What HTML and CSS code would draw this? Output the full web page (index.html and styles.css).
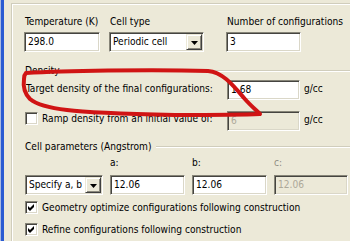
FILE: index.html
```html
<!DOCTYPE html>
<html>
<head>
<meta charset="utf-8">
<link rel="stylesheet" href="styles.css">
</head>
<body>
<div class="win">
  <div class="edge"></div>
  <div class="pane">
    <div class="frame">
      <div class="row-top">
        <div class="field w-temp">
          <div class="lbl">Temperature (K)</div>
          <div class="box">298.0</div>
        </div>
        <div class="field w-cell">
          <div class="lbl">Cell type</div>
          <div class="box combo"><span class="val">Periodic cell</span><span class="drop"><svg width="7" height="4" viewBox="0 0 7 4"><polygon points="0,0 7,0 3.5,4" fill="#000"/></svg></span></div>
        </div>
        <div class="field w-num">
          <div class="lbl">Number of configurations</div>
          <div class="box">3</div>
        </div>
      </div>

      <div class="ghead g-density"><span>Density</span><i class="rule"></i></div>
      <div class="drow d1">
        <div class="ilbl">Target density of the final configurations:</div>
        <div class="box">1.68</div>
        <div class="unit">g/cc</div>
      </div>
      <div class="drow d2">
        <div class="check-line"><span class="cb"></span><span>Ramp density from an initial value of:</span></div>
        <div class="box disabled">6</div>
        <div class="unit">g/cc</div>
      </div>

      <div class="ghead g-cell"><span>Cell parameters (Angstrom)</span><i class="rule"></i></div>
      <div class="cgrid">
        <div></div>
        <div class="lbl">a:</div>
        <div class="lbl">b:</div>
        <div class="lbl dim">c:</div>
        <div class="box combo"><span class="val">Specify a, b</span><span class="drop"><svg width="7" height="4" viewBox="0 0 7 4"><polygon points="0,0 7,0 3.5,4" fill="#000"/></svg></span></div>
        <div class="box">12.06</div>
        <div class="box">12.06</div>
        <div class="box disabled">12.06</div>
      </div>

      <div class="check-line c1"><span class="cb"><svg width="9" height="9" viewBox="0 0 9 9"><polygon points="1,3 3,5 7,1 7,4 3,8 1,6" fill="#000"/></svg></span><span>Geometry optimize configurations following construction</span></div>
      <div class="check-line c2"><span class="cb"><svg width="9" height="9" viewBox="0 0 9 9"><polygon points="1,3 3,5 7,1 7,4 3,8 1,6" fill="#000"/></svg></span><span>Refine configurations following construction</span></div>
    </div>
  </div>
  <svg class="ink" width="350" height="241" viewBox="0 0 350 241"><path d="M26 73 C60 71,150 69,208 71 C222 72,232 84,244 98 C250 105,256 110,260 114 C240 115,200 115,175 115 C130 114,90 113,67 110 C50 108,36 104,30 99 C25 94,23 86,24 79 C24 76,25 74,26 73" fill="none" stroke="#D01414" stroke-width="4" stroke-linecap="round" stroke-linejoin="round"/></svg>
</div>
</body>
</html>
```

FILE: styles.css
```css
html, body {
  margin: 0;
  padding: 0;
}
body {
  width: 350px;
  height: 241px;
  overflow: hidden;
  background: #ECE9D8;
  font-family: "DejaVu Sans Condensed", "Liberation Sans", Arial, sans-serif;
  font-size: 10.1px;
  color: #000;
}
.win {
  position: relative;
  display: flex;
  width: 350px;
  height: 241px;
}
.edge {
  width: 4px;
  flex: none;
  background: linear-gradient(to right, #A9B9E0 0, #A9B9E0 1px, #2A5BD2 1px, #2A5BD2 4px);
}
.pane {
  flex: 1;
  min-width: 0;
}
.frame {
  margin: 3px 0 0 7px;
  border-top: 1px solid #D0CDBC;
  border-left: 1px solid #D0CDBC;
  box-shadow: inset 1px 1px 0 #FFFFFF;
  padding: 11px 0 0 12px;
  height: 240px;
  box-sizing: border-box;
}
.row-top {
  display: flex;
}
.field {
  display: flex;
  flex-direction: column;
  gap: 4px;
}
.w-temp { width: 76px; }
.w-cell { width: 95px; margin-left: 9px; }
.w-num { width: 75px; margin-left: 22px; }
.lbl {
  line-height: 13px;
  height: 13px;
  white-space: nowrap;
  padding-left: 1px;
}
.dim { color: #8F8D82; }
.box {
  height: 20px;
  box-sizing: border-box;
  border: 1px solid;
  border-color: #878578 #FFFFFF #FFFFFF #878578;
  box-shadow: inset 1px 1px 0 #454440, inset -1px -1px 0 #DAD7C8;
  background: #FFFFFF;
  line-height: 18px;
  padding: 0 2px 0 3px;
  white-space: nowrap;
  overflow: hidden;
}
.box.disabled {
  background: #ECE9D8;
  color: #ACA899;
}
.combo {
  display: flex;
  align-items: center;
  padding-right: 0;
}
.combo .val {
  flex: 1;
  min-width: 0;
  overflow: hidden;
}
.drop {
  flex: none;
  width: 16px;
  height: 16px;
  margin-right: 1px;
  box-sizing: border-box;
  background: #ECE9D8;
  border: 1px solid;
  border-color: #ECE9D8 #404040 #404040 #ECE9D8;
  box-shadow: inset 1px 1px 0 #FFFFFF, inset -1px -1px 0 #8A887C;
  display: flex;
  align-items: center;
  justify-content: center;
}
.drop svg { display: block; margin-top: 1px; }
.ghead {
  display: flex;
  align-items: center;
  line-height: 13px;
  margin-top: 12px;
}
.ghead span {
  padding-left: 1px;
  white-space: nowrap;
}
.g-cell { margin-top: 9px; }
.rule {
  flex: 1;
  height: 0;
  border-top: 1px solid #D0CDBC;
  border-bottom: 1px solid #FFFFFF;
  margin-left: 5px;
}
.drow {
  display: grid;
  grid-template-columns: 203px 73px auto;
  align-items: start;
}
.d1 { margin-top: 3px; }
.d2 { margin-top: 11px; }
.ilbl {
  line-height: 13px;
  margin-top: 2px;
  padding-left: 2px;
  white-space: nowrap;
}
.unit {
  line-height: 13px;
  margin-top: 2px;
  padding-left: 4px;
}
.check-line {
  display: flex;
  align-items: center;
  gap: 4px;
  padding-left: 1px;
  line-height: 13px;
  white-space: nowrap;
}
.d2 .check-line { margin-top: 1px; }
.c1 { margin-top: 6px; }
.c2 { margin-top: 9px; }
.cb {
  flex: none;
  width: 13px;
  height: 13px;
  box-sizing: border-box;
  border: 1px solid;
  border-color: #878578 #FFFFFF #FFFFFF #878578;
  box-shadow: inset 1px 1px 0 #454440, inset -1px -1px 0 #DAD7C8;
  background: #FFFFFF;
  display: flex;
  align-items: center;
  justify-content: center;
}
.cb svg { display: block; }
.cgrid {
  display: grid;
  grid-template-columns: 78px 75px 75px 74px;
  grid-template-rows: 13px 20px;
  column-gap: 7px;
  row-gap: 6px;
  margin-top: 3px;
  margin-left: 1px;
}
.cgrid .lbl { padding-left: 0; }
.ink {
  position: absolute;
  left: 0;
  top: 0;
  pointer-events: none;
}
```
